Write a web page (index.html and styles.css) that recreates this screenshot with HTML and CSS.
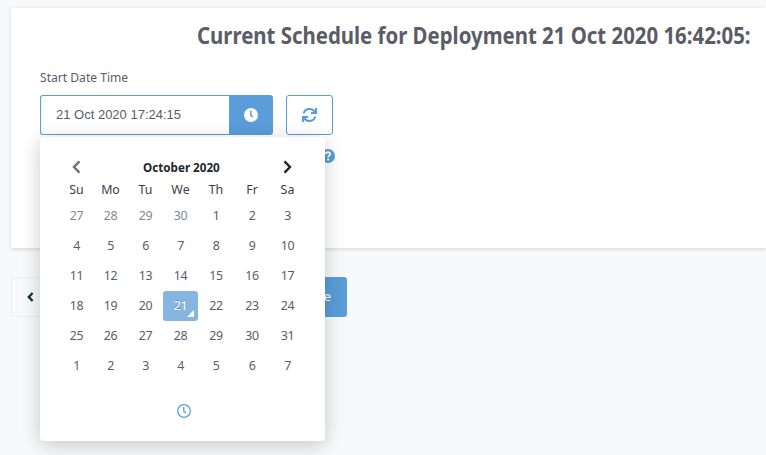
FILE: index.html
```html
<!DOCTYPE html>
<html lang="en">
<head>
<meta charset="utf-8">
<title>Deployment Schedule</title>
<link rel="stylesheet" href="styles.css">
</head>
<body>
<main class="page">
  <section class="card">
    <h1 class="title"><span class="fit">Current Schedule for Deployment 21 Oct 2020 16:42:05:</span></h1>
    <label class="label" for="start"><span class="fit">Start Date Time</span></label>
    <div class="controls">
      <div class="input-group">
        <div class="field" id="start">21 Oct 2020 17:24:15</div>
        <div class="addon"><svg width="14" height="14" viewBox="0 0 14 14"><circle cx="7" cy="7" r="7" fill="#fff"/><path d="M6.8 2.8v4.5l2.2 1.7" fill="none" stroke="#5b9dd8" stroke-width="1.5"/></svg></div>
      </div>
      <div class="refresh"><svg width="16" height="16" viewBox="0 0 16 16" fill="none" stroke="#5b9dd8" stroke-width="2"><path d="M1.6 6.5A6.2 6.2 0 0 1 12.8 4.9M13.4 9.5A6.2 6.2 0 0 1 2.2 11.1"/><path d="M14 1v5H9M1 15v-5h5"/></svg></div>
    </div>
    <div class="help"><svg width="14" height="14" viewBox="0 0 14 14"><circle cx="7" cy="7" r="7" fill="#5b9dd8"/><path d="M4.6 5.1C5 2.5 9.4 2.7 9.2 5.2 9.1 6.7 7.2 6.6 7.2 8.2M7.2 9.6v1.9" fill="none" stroke="#fff" stroke-width="1.8"/></svg></div>
  </section>
  <nav class="actions">
    <div class="back"><svg width="7" height="10" viewBox="0 0 7 10"><path d="M5.6 1L1.8 5l3.8 4" fill="none" stroke="#1d2b36" stroke-width="2.3"/></svg></div>
    <div class="save">e</div>
  </nav>
</main>
<div class="picker">
  <div class="month">
    <svg width="9" height="14" viewBox="0 0 9 14"><path d="M7.5 1.3L2 7l5.5 5.7" fill="none" stroke="#68737c" stroke-width="2.4"/></svg>
    <strong><span class="fit">October 2020</span></strong>
    <svg width="9" height="14" viewBox="0 0 9 14"><path d="M1.5 1.3L7 7l-5.5 5.7" fill="none" stroke="#212529" stroke-width="2.4"/></svg>
  </div>
  <div class="week names"><span>Su</span><span>Mo</span><span>Tu</span><span>We</span><span>Th</span><span>Fr</span><span>Sa</span></div>
  <div class="week"><span class="old">27</span><span class="old">28</span><span class="old">29</span><span class="old">30</span><span>1</span><span>2</span><span>3</span></div>
  <div class="week"><span>4</span><span>5</span><span>6</span><span>7</span><span>8</span><span>9</span><span>10</span></div>
  <div class="week"><span>11</span><span>12</span><span>13</span><span>14</span><span>15</span><span>16</span><span>17</span></div>
  <div class="week"><span>18</span><span>19</span><span>20</span><span class="today">21</span><span>22</span><span>23</span><span>24</span></div>
  <div class="week"><span>25</span><span>26</span><span>27</span><span>28</span><span>29</span><span>30</span><span>31</span></div>
  <div class="week"><span>1</span><span>2</span><span>3</span><span>4</span><span>5</span><span>6</span><span>7</span></div>
  <div class="time"><svg width="14" height="14" viewBox="0 0 14 14" fill="none" stroke="#5b9fdd"><circle cx="7" cy="7" r="6.3" stroke-width="1.3"/><path d="M6.8 3v4.3l2.2 1.6" stroke-width="1.3"/></svg></div>
</div>
</body>
</html>
```
FILE: styles.css
```css
* { box-sizing: border-box; }
body {
  margin: 0;
  height: 455px;
  overflow: hidden;
  position: relative;
  background: #f7f9fb;
  color: #5a5c66;
  font: 13px/20px "Noto Sans", sans-serif;
}
svg { display: block; flex: none; }
.page { padding: 8px 0 0 11px; }
.card {
  height: 240px;
  padding: 13px 0 0 29px;
  background: #fff;
  box-shadow: 0 1px 4px rgba(0, 0, 0, .15);
}
.fit { display: inline-block; white-space: nowrap; transform-origin: 0 50%; }
.title { margin: 0 0 0 157px; height: 30px; overflow: hidden; font-size: 22.5px; line-height: 30px; font-weight: 700; }
.title .fit { transform: scaleX(.906); }
.label { display: block; margin-top: 17px; height: 20px; font-size: 12.6px; }
.label .fit { transform: scaleX(.96); }
.controls { display: flex; gap: 13px; margin-top: 7px; }
.input-group { display: flex; width: 233px; height: 40px; }
.field {
  flex: 1;
  padding-left: 15px;
  border: 1px solid #5b9dd8;
  border-right: 0;
  border-radius: 3px 0 0 3px;
  font: 13px/38px "Liberation Sans", sans-serif;
}
.addon {
  display: flex;
  align-items: center;
  justify-content: center;
  width: 44px;
  background: #5b9dd8;
  border-radius: 0 3px 3px 0;
}
.refresh {
  display: flex;
  align-items: center;
  justify-content: center;
  width: 47px;
  height: 40px;
  border: 1px solid #5b9dd8;
  border-radius: 3px;
}
.help { margin: 14px 0 0 281px; }
.actions { display: flex; justify-content: space-between; width: 336px; margin-top: 29px; }
.back {
  display: flex;
  align-items: center;
  width: 110px;
  height: 40px;
  padding-left: 15px;
  border: 1px solid #eceef0;
  border-radius: 3px;
}
.save {
  width: 80px;
  height: 40px;
  padding-right: 16px;
  border-radius: 3px;
  background: #5b9dd8;
  color: #fff;
  line-height: 39px;
  text-align: right;
}
.picker {
  position: absolute;
  left: 40px;
  top: 137px;
  width: 285px;
  height: 304px;
  padding: 20px;
  border-radius: 4px;
  background: #fff;
  box-shadow: 0 4px 20px rgba(0, 0, 0, .2);
}
.month {
  display: flex;
  align-items: center;
  justify-content: space-between;
  height: 21px;
  padding: 0 13px 2px 12px;
  color: #212529;
  font-size: 12.6px;
}
.month strong { width: 78px; padding-top: 3px; }
.month .fit { transform: scaleX(.925); }
.week { display: grid; grid-template-columns: 33px 35px 35px 35px 36px 36px 35px; height: 30px; line-height: 29px; font-size: 12.4px; letter-spacing: -.4px; text-align: center; }
.names { height: 23px; line-height: 23px; letter-spacing: 0; color: #3c4046; }
.old { color: #858692; }
.today {
  position: relative;
  border-radius: 3px;
  background: #87b5e1;
  color: #fff;
  text-shadow: 0 -1px 0 rgba(0, 0, 0, .25);
}
.today::after {
  content: "";
  position: absolute;
  right: 4px;
  bottom: 4px;
  border-left: 7px solid transparent;
  border-bottom: 7px solid #fff;
}
.time { display: flex; justify-content: center; margin: 23px 0 0 43px; width: 162px; }
```
